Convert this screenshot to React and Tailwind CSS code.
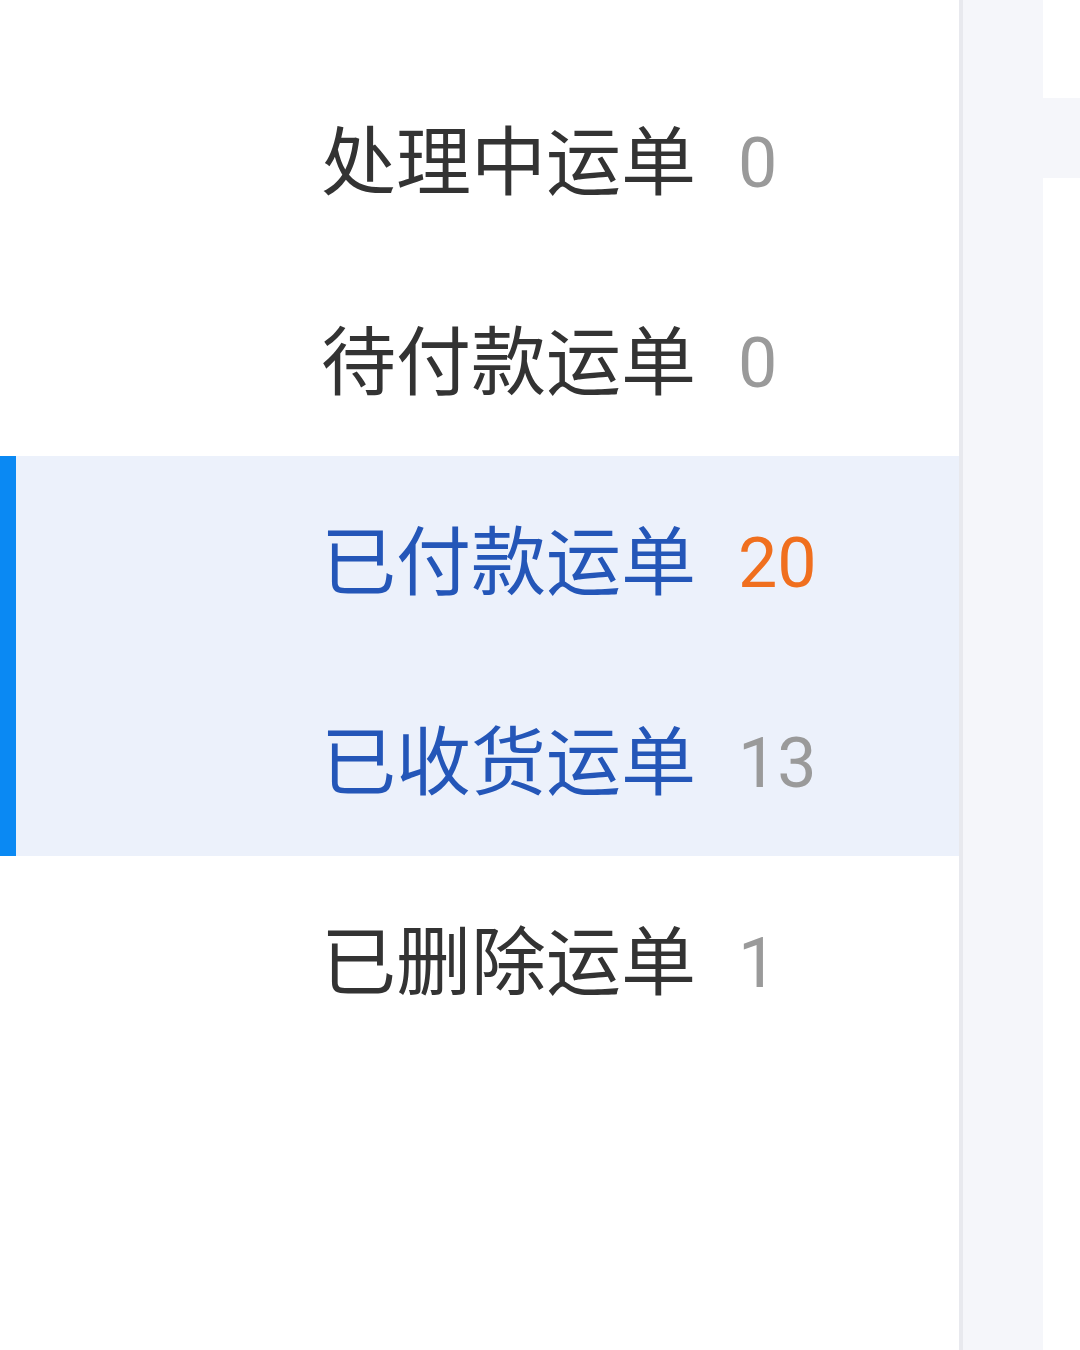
import React from "react";

const items = [
  { label: "处理中运单", count: 0 },
  { label: "待付款运单", count: 0 },
  { label: "已付款运单", count: 20, active: true, hot: true },
  { label: "已收货运单", count: 13, active: true, split: true },
  { label: "已删除运单", count: 1 },
];

export default function App() {
  return (
    <div className="flex w-[1080px] h-[1350px] bg-white overflow-hidden" style={{ fontFamily: '"Noto Sans CJK SC", "Noto Sans", sans-serif' }}>
      <div className="w-[963px] h-full border-r-4 border-[#e8e9ee] pt-[56px]">
        {items.map((it) => (
          <div
            key={it.label}
            className={
              it.active
                ? "h-[200px] flex items-center bg-[#ecf1fb] border-l-[16px] border-l-[#0a89f3] pl-[305px]"
                : "h-[200px] flex items-center pl-[321px]"
            }
          >
            <span className={it.active ? "text-[75px] leading-none text-[#2456b8]" : "text-[75px] leading-none text-[#333333]"}>
              {it.label}
            </span>
            <span
              className={
                it.hot
                  ? "ml-[42px] mt-[14px] text-[70px] leading-none text-[#f06f1e]"
                  : "ml-[42px] mt-[14px] text-[70px] leading-none text-[#9a9a9a]"
              }
              style={{ fontFamily: "Roboto, sans-serif" }}
            >
              {it.count}
            </span>
          </div>
        ))}
      </div>
      <div className="w-[80px] h-full bg-[#f5f6fa]" />
      <div className="flex-1 flex flex-col">
        <div className="h-[98px] bg-white" />
        <div className="h-[80px] bg-[#f5f6fa]" />
        <div className="flex-1 bg-white" />
      </div>
    </div>
  );
}
